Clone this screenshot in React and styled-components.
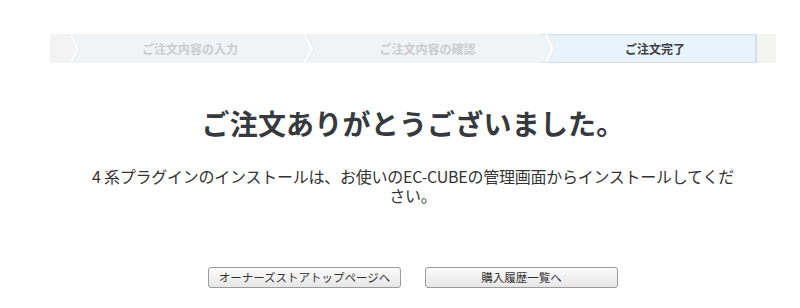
import React from "react";
import styled, { createGlobalStyle } from "styled-components";

const Global = createGlobalStyle`
  html, body { margin: 0; padding: 0; background: #ffffff; }
  body { font-family: "Noto Sans CJK JP", "Noto Sans", sans-serif; color: #333; }
`;

const Page = styled.div`
  width: 726px;
  margin-left: 50px;
  padding-top: 34px;
`;

const StepBar = styled.div`
  display: flex;
  height: 29px;
  background: #f3f3f3;
`;

const Cap = styled.div`
  width: ${(p) => p.$w}px;
  background: ${(p) => p.$bg};
  flex: none;
`;

const Step = styled.div`
  width: ${(p) => p.$w}px;
  flex: none;
  display: flex;
  align-items: center;
  justify-content: center;
  font-size: 12px;
  font-weight: 700;
  color: ${(p) => (p.$active ? "#3c3f44" : "#c8cdd2")};
  background: ${(p) => (p.$active ? "#e9f3fb" : "#f1f4f6")};
  box-sizing: border-box;
  border-top: ${(p) => (p.$active ? "1px solid #cfdbe6" : "none")};
  border-bottom: ${(p) => (p.$active ? "1px solid #cfdbe6" : "none")};
  border-right: ${(p) => (p.$active ? "2px solid #d6dee6" : "none")};
`;

const ChevronSvg = styled.svg`
  display: block;
  flex: none;
`;

const Chevron = ({ left, right, activeRight }) => (
  <ChevronSvg width="14" height="29" viewBox="0 0 14 29">
    <rect x="0" y="0" width="14" height="29" fill={right} />
    <polygon points="0,0 5,0 12,14.5 5,29 0,29" fill={left} />
    {activeRight && (
      <>
        <line x1="0" y1="0.5" x2="14" y2="0.5" stroke="#cfdbe6" strokeWidth="1" />
        <line x1="0" y1="28.5" x2="14" y2="28.5" stroke="#cfdbe6" strokeWidth="1" />
      </>
    )}
    <polyline points="6.5,0 13.5,14.5 6.5,29" fill="none" stroke="#e2e6ea" strokeWidth="1.2" />
    <polyline points="5,0 12,14.5 5,29" fill="none" stroke="#ffffff" strokeWidth="2" />
  </ChevronSvg>
);

const Title = styled.h1`
  margin: 42px 0 0;
  text-align: center;
  font-size: 28px;
  font-weight: 700;
  line-height: 36px;
  color: #36393e;
  letter-spacing: 0.2px;
`;

const Message = styled.p`
  width: 650px;
  margin: 26px auto 0;
  text-align: center;
  font-size: 16px;
  line-height: 19px;
  font-weight: 400;
  letter-spacing: -0.25px;
  color: #333;
`;

const Buttons = styled.div`
  display: flex;
  justify-content: center;
  gap: 24px;
  margin-top: 62px;
`;

const Button = styled.button`
  width: 193px;
  height: 21px;
  padding: 0;
  border: 1px solid #9a9a9a;
  border-radius: 3px;
  background: linear-gradient(#fbfbfb, #e6e6e6);
  font-family: "Noto Sans CJK JP", sans-serif;
  font-size: 11.5px;
  color: #333;
  line-height: 19px;
  cursor: pointer;
`;

export default function App() {
  return (
    <>
      <Global />
      <Page>
        <StepBar>
          <Cap $w={16} $bg="#f3f3f3" />
          <Chevron left="#f3f3f3" right="#f1f4f6" />
          <Step $w={220}>ご注文内容の入力</Step>
          <Chevron left="#f1f4f6" right="#f1f4f6" />
          <Step $w={227}>ご注文内容の確認</Step>
          <Chevron left="#f1f4f6" right="#e9f3fb" activeRight />
          <Step $w={202} $active>ご注文完了</Step>
          <Cap $w={19} $bg="#f4f4f2" />
        </StepBar>
        <Title>ご注文ありがとうございました。</Title>
        <Message>
          4 系プラグインのインストールは、お使いのEC-CUBEの管理画面からインストールしてください。
        </Message>
        <Buttons>
          <Button>オーナーズストアトップページへ</Button>
          <Button>購入履歴一覧へ</Button>
        </Buttons>
      </Page>
    </>
  );
}
